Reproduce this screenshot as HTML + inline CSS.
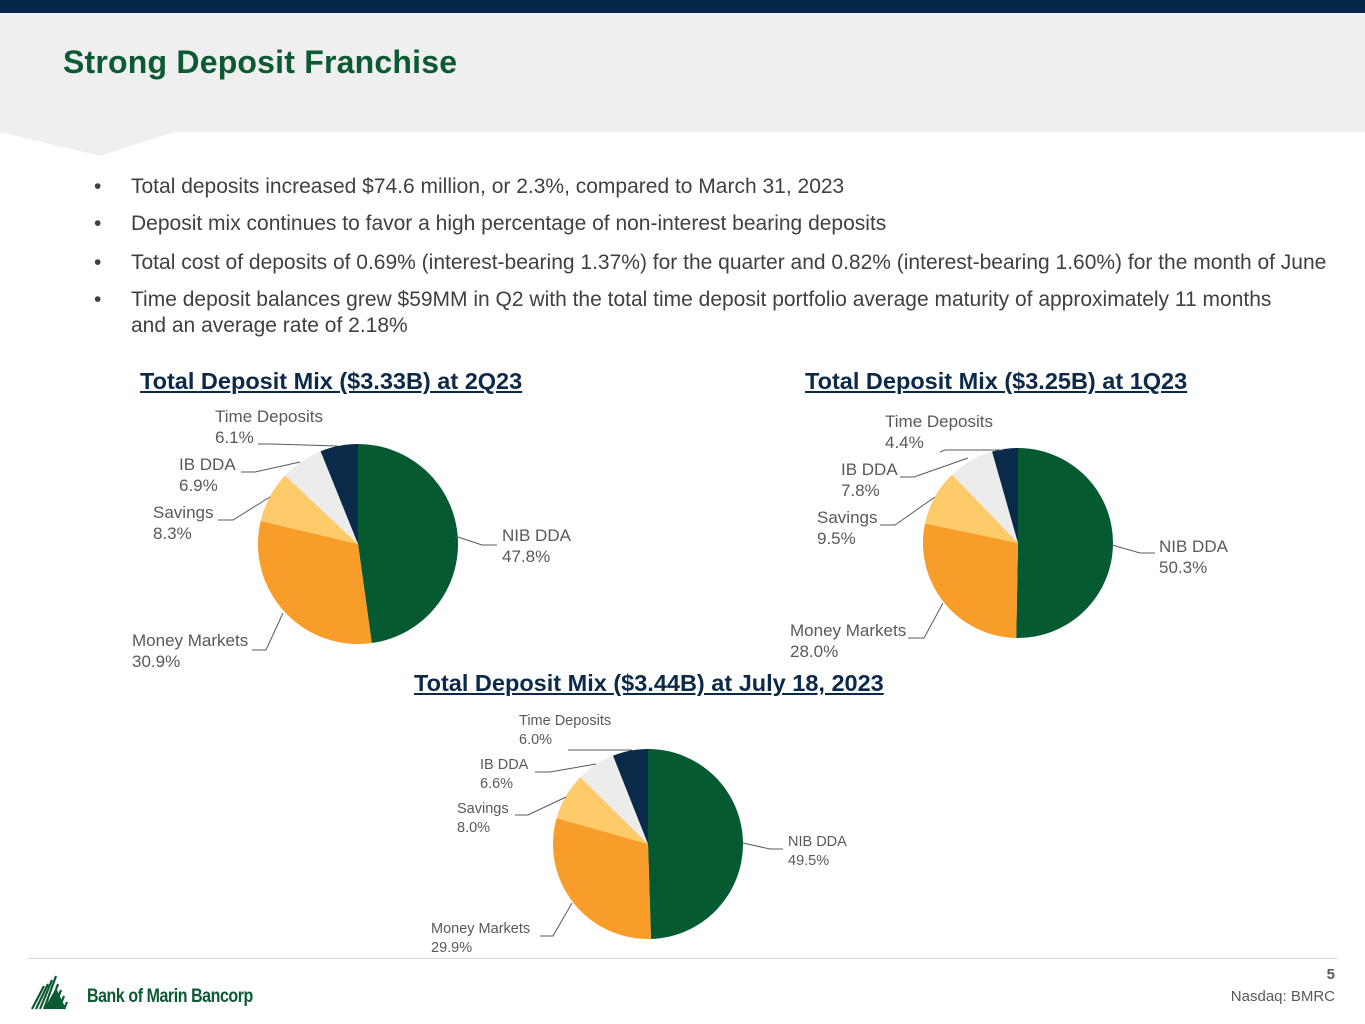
<!DOCTYPE html>
<html><head><meta charset="utf-8">
<style>
*{margin:0;padding:0;box-sizing:border-box}
body{width:1365px;height:1024px;position:relative;background:#fff;font-family:"Liberation Sans",sans-serif;overflow:hidden}
.top{position:absolute;left:0;top:0;width:1365px;height:13px;background:#05274a}
.hdr{position:absolute;left:0;top:13px;width:1365px;height:119px;background:#efefef}
h1{position:absolute;left:63px;top:44px;font-size:32px;font-weight:bold;color:#0b5a32;white-space:nowrap;letter-spacing:0.2px}
.bul{position:absolute;left:94px;font-size:21px;line-height:26px;color:#404040;white-space:nowrap}
.bul span{position:absolute;left:37px;top:0}
.ct{position:absolute;font-size:23.5px;font-weight:bold;color:#0b2a4a;text-decoration:underline;white-space:nowrap}
.lb{position:absolute;font-size:17px;color:#595959;line-height:21px;white-space:nowrap}
.lb.s{font-size:14.5px;line-height:19px}
.foot{position:absolute;left:28px;top:958px;width:1310px;height:1px;background:#d9d9d9}
</style></head><body>
<div class="top"></div>
<div class="hdr"></div>
<svg style="position:absolute;left:0;top:130px" width="200" height="30"><polygon points="0,0 180,0 100,26 0,2" fill="#efefef"/></svg>
<h1>Strong Deposit Franchise</h1>
<div class="bul" style="top:174px">•<span>Total deposits increased $74.6 million, or 2.3%, compared to March 31, 2023</span></div>
<div class="bul" style="top:211px">•<span>Deposit mix continues to favor a high percentage of non-interest bearing deposits</span></div>
<div class="bul" style="top:250px">•<span>Total cost of deposits of 0.69% (interest-bearing 1.37%) for the quarter and 0.82% (interest-bearing 1.60%) for the month of June</span></div>
<div class="bul" style="top:287px">•<span>Time deposit balances grew $59MM in Q2 with the total time deposit portfolio average maturity of approximately 11 months<br>and an average rate of 2.18%</span></div>

<div class="ct" style="left:140px;top:368px">Total Deposit Mix ($3.33B) at 2Q23</div>
<div class="ct" style="left:805px;top:368px">Total Deposit Mix ($3.25B) at 1Q23</div>
<div class="ct" style="left:414px;top:670px">Total Deposit Mix ($3.44B) at July 18, 2023</div>

<svg id="pies" style="position:absolute;left:0;top:0" width="1365" height="1024"></svg>

<div class="lb" style="left:502px;top:525px">NIB DDA<br>47.8%</div>
<div class="lb" style="left:132px;top:630px">Money Markets<br>30.9%</div>
<div class="lb" style="left:153px;top:502px">Savings<br>8.3%</div>
<div class="lb" style="left:179px;top:454px">IB DDA<br>6.9%</div>
<div class="lb" style="left:215px;top:406px">Time Deposits<br>6.1%</div>

<div class="lb" style="left:1159px;top:536px">NIB DDA<br>50.3%</div>
<div class="lb" style="left:790px;top:620px">Money Markets<br>28.0%</div>
<div class="lb" style="left:817px;top:507px">Savings<br>9.5%</div>
<div class="lb" style="left:841px;top:459px">IB DDA<br>7.8%</div>
<div class="lb" style="left:885px;top:411px">Time Deposits<br>4.4%</div>

<div class="lb s" style="left:788px;top:833px">NIB DDA<br>49.5%</div>
<div class="lb s" style="left:431px;top:920px">Money Markets<br>29.9%</div>
<div class="lb s" style="left:457px;top:800px">Savings<br>8.0%</div>
<div class="lb s" style="left:480px;top:756px">IB DDA<br>6.6%</div>
<div class="lb s" style="left:519px;top:712px">Time Deposits<br>6.0%</div>

<div class="foot"></div>
<svg style="position:absolute;left:30px;top:974px" width="50" height="36" viewBox="0 0 50 36">
<g stroke="#0b5a32" stroke-width="2.2">
<line x1="2" y1="35" x2="14" y2="12"/><line x1="6" y1="35" x2="18" y2="10"/><line x1="10" y1="35" x2="22" y2="6"/><line x1="14" y1="35" x2="26" y2="2"/><line x1="19" y1="35" x2="28" y2="10"/><line x1="24" y1="35" x2="31" y2="16"/><line x1="29" y1="35" x2="34" y2="22"/><line x1="34" y1="35" x2="37" y2="28"/>
</g><polygon points="14,35 26,14 36,35" fill="#0b5a32"/></svg>
<div style="position:absolute;left:87px;top:986px;font-size:19px;font-weight:bold;color:#0b5a32;transform:scaleX(0.84);transform-origin:left;white-space:nowrap;letter-spacing:-0.5px">Bank of Marin Bancorp</div>
<div style="position:absolute;right:30px;top:966px;font-size:15px;font-weight:bold;color:#595959">5</div>
<div style="position:absolute;right:30px;top:988px;font-size:15px;color:#595959">Nasdaq: BMRC</div>

<script>
var cols=["#065a32","#f89c2a","#fdcb6a","#ececec","#0a2a4a"];
var pies=[
 {cx:358,cy:544,r:100,v:[47.8,30.9,8.3,6.9,6.1],L:[[[455,536],[482,545],[497,545]],[[283,613],[266,650],[252,650]],[[270,497],[233,520],[218,520]],[[300,462],[255,472],[241,472]],[[338,446],[272,444],[258,444]]]},
 {cx:1018,cy:543,r:95,v:[50.3,28.0,9.5,7.8,4.4],L:[[[1112,545],[1140,553],[1155,553]],[[943,603],[924,638],[908,638]],[[935,497],[895,525],[880,525]],[[968,458],[914,477],[900,477]],[[1003,450],[945,450],[940,452]]]},
 {cx:648,cy:844,r:95,v:[49.5,29.9,8.0,6.6,6.0],L:[[[743,843],[770,849],[783,849]],[[572,903],[553,936],[540,936]],[[566,797],[528,815],[515,815]],[[596,764],[550,772],[535,772]],[[632,750],[570,750],[568,750]]]}
];
var s="";
pies.forEach(function(p){
 var a=-Math.PI/2;
 p.v.forEach(function(v,i){
  var b=a+v/100*2*Math.PI;
  var x1=p.cx+p.r*Math.cos(a),y1=p.cy+p.r*Math.sin(a),x2=p.cx+p.r*Math.cos(b),y2=p.cy+p.r*Math.sin(b);
  s+='<path d="M'+p.cx+','+p.cy+' L'+x1+','+y1+' A'+p.r+','+p.r+' 0 '+(v>50?1:0)+' 1 '+x2+','+y2+' Z" fill="'+cols[i]+'"/>';
  a=b;
 });
 p.L.forEach(function(l){s+='<polyline points="'+l.map(function(q){return q.join(",")}).join(" ")+'" fill="none" stroke="#595959" stroke-width="1"/>';});
});
document.getElementById("pies").innerHTML=s;
</script>
</body></html>
